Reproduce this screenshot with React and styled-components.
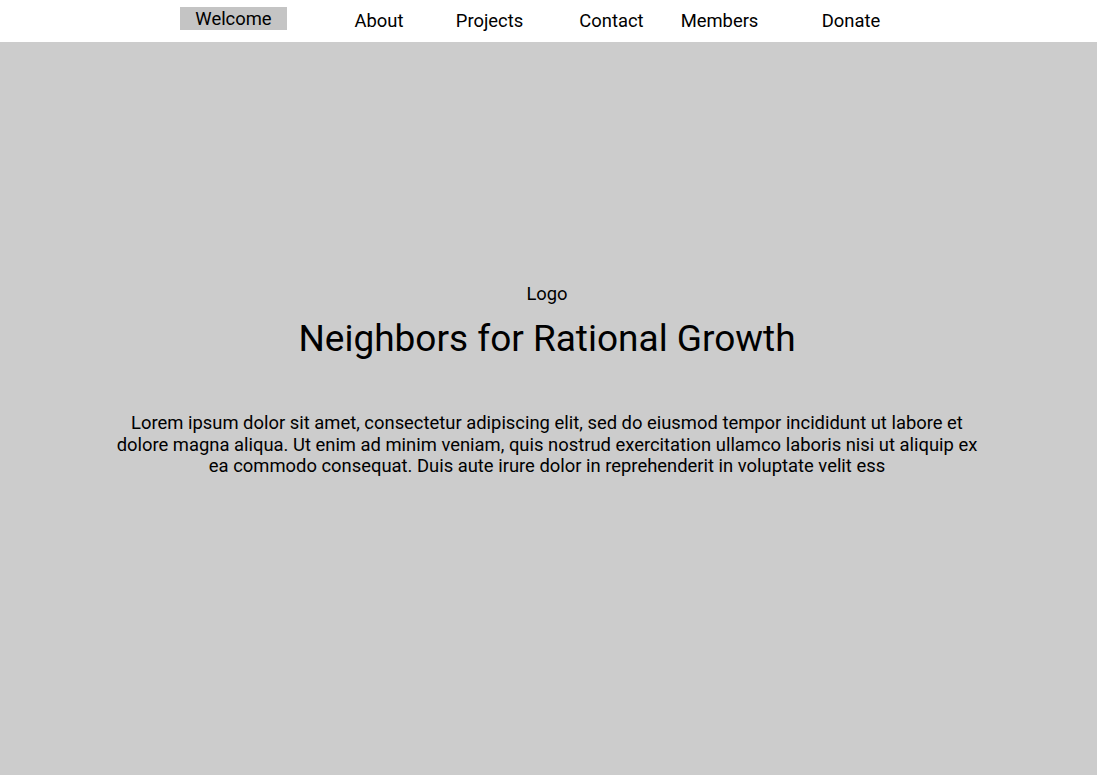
import React from "react";
import styled, { createGlobalStyle } from "styled-components";

const Global = createGlobalStyle`
  html, body { margin: 0; padding: 0; }
  body { font-family: Roboto, "Liberation Sans", sans-serif; color: #000; background: #ccc; }
`;

const Page = styled.div`
  display: flex;
  flex-direction: column;
  min-height: 775px;
`;

const NavBar = styled.nav`
  height: 42px;
  background: #fff;
  display: flex;
  align-items: flex-start;
  padding-left: 180px;
`;

const NavItem = styled.a`
  width: 107px;
  margin-left: ${(p) => p.$offset || 0}px;
  margin-top: ${(p) => (p.$active ? 7 : 9)}px;
  height: 23px;
  line-height: 23px;
  text-align: center;
  font-size: 18.4px;
  color: #000;
  text-decoration: none;
  white-space: nowrap;
  background: ${(p) => (p.$active ? "#c4c4c4" : "transparent")};
`;

const Hero = styled.main`
  flex: 1;
  background: #ccc;
  display: flex;
  flex-direction: column;
  align-items: center;
  padding: 241px 3px 0 0;
`;

const Logo = styled.div`
  font-size: 18.4px;
  line-height: 21px;
`;

const Title = styled.h1`
  margin: 11px 0 0;
  font-weight: 400;
  font-size: 37px;
  line-height: 47px;
`;

const Lead = styled.p`
  margin: 50px 0 0;
  max-width: 875px;
  text-align: center;
  font-size: 18.4px;
  line-height: 21.5px;
`;

const items = [
  { label: "Welcome", offset: 0, active: true },
  { label: "About", offset: 38.5 },
  { label: "Projects", offset: 3.5 },
  { label: "Contact", offset: 15 },
  { label: "Members", offset: 1 },
  { label: "Donate", offset: 24.5 },
];

export default function App() {
  return (
    <Page>
      <Global />
      <NavBar>
        {items.map((it) => (
          <NavItem key={it.label} href="#" $offset={it.offset} $active={it.active}>
            {it.label}
          </NavItem>
        ))}
      </NavBar>
      <Hero>
        <Logo>Logo</Logo>
        <Title>Neighbors for Rational Growth</Title>
        <Lead>
          Lorem ipsum dolor sit amet, consectetur adipiscing elit, sed do eiusmod tempor incididunt ut labore et
          dolore magna aliqua. Ut enim ad minim veniam, quis nostrud exercitation ullamco laboris nisi ut aliquip ex
          ea commodo consequat. Duis aute irure dolor in reprehenderit in voluptate velit ess
        </Lead>
      </Hero>
    </Page>
  );
}
